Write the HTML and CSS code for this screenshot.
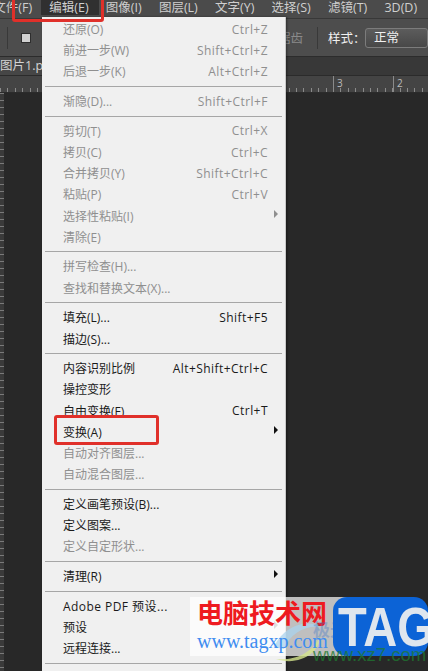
FILE: index.html
```html
<!DOCTYPE html>
<html lang="zh">
<head>
<meta charset="utf-8">
<title>编辑菜单</title>
<link rel="stylesheet" href="styles.css">
</head>
<body>
<div class="app">
  <nav class="menubar">
    <span class="mi first">文件(F)</span>
    <span class="mi active">编辑(E)</span>
    <span class="mi">图像(I)</span>
    <span class="mi">图层(L)</span>
    <span class="mi">文字(Y)</span>
    <span class="mi">选择(S)</span>
    <span class="mi">滤镜(T)</span>
    <span class="mi">3D(D)</span>
  </nav>
  <div class="options">
    <span class="vsep first-sep"></span>
    <span class="swatch"></span>
    <span class="aa">消除锯齿</span>
    <span class="vsep"></span>
    <span class="style-label">样式：</span>
    <span class="style-select">正常</span>
  </div>
  <div class="tabbar"><span class="tab">图片1.png</span></div>
  <div class="ruler">
    <span class="mark m3">3</span>
    <span class="mark m2">2</span>
  </div>
  <div class="workspace"><div class="vruler"></div></div>
</div>

<div class="menu">
  <div class="row off"><span>还原(O)</span><span class="key">Ctrl+Z</span></div>
  <div class="row off"><span>前进一步(W)</span><span class="key">Shift+Ctrl+Z</span></div>
  <div class="row off"><span>后退一步(K)</span><span class="key">Alt+Ctrl+Z</span></div>
  <hr class="sep">
  <div class="row off"><span>渐隐(D)...</span><span class="key">Shift+Ctrl+F</span></div>
  <hr class="sep">
  <div class="row off"><span>剪切(T)</span><span class="key">Ctrl+X</span></div>
  <div class="row off"><span>拷贝(C)</span><span class="key">Ctrl+C</span></div>
  <div class="row off"><span>合并拷贝(Y)</span><span class="key">Shift+Ctrl+C</span></div>
  <div class="row off"><span>粘贴(P)</span><span class="key">Ctrl+V</span></div>
  <div class="row off"><span>选择性粘贴(I)</span><i class="arrow dim"></i></div>
  <div class="row off"><span>清除(E)</span></div>
  <hr class="sep">
  <div class="row off"><span>拼写检查(H)...</span></div>
  <div class="row off"><span>查找和替换文本(X)...</span></div>
  <hr class="sep">
  <div class="row"><span>填充(L)...</span><span class="key">Shift+F5</span></div>
  <div class="row"><span>描边(S)...</span></div>
  <hr class="sep">
  <div class="row"><span>内容识别比例</span><span class="key">Alt+Shift+Ctrl+C</span></div>
  <div class="row"><span>操控变形</span></div>
  <div class="row"><span>自由变换(F)</span><span class="key">Ctrl+T</span></div>
  <div class="row"><span>变换(A)</span><i class="arrow"></i></div>
  <div class="row off"><span>自动对齐图层...</span></div>
  <div class="row off"><span>自动混合图层...</span></div>
  <hr class="sep">
  <div class="row"><span>定义画笔预设(B)...</span></div>
  <div class="row"><span>定义图案...</span></div>
  <div class="row off"><span>定义自定形状...</span></div>
  <hr class="sep">
  <div class="row"><span>清理(R)</span><i class="arrow"></i></div>
  <hr class="sep">
  <div class="row"><span class="key">Adobe PDF 预设...</span></div>
  <div class="row"><span>预设</span><i class="arrow dim"></i></div>
  <div class="row"><span>远程连接...</span></div>
  <hr class="sep">
</div>

<div class="callout c-top"></div>
<div class="callout c-mid"></div>

<div class="watermark">
  <div class="wm-text">
    <svg class="wm-swirl" viewBox="0 0 60 50" width="60" height="50" aria-hidden="true">
      <path d="M4 34 C14 12 38 6 50 14 C36 12 20 20 14 36 Z" fill="#a9d3ee" opacity=".75"/>
      <path d="M6 46 C24 48 44 40 50 22 C52 38 30 54 6 46 Z" fill="#d5e58c" opacity=".8"/>
    </svg>
    <div class="wm-cn">电脑技术网</div>
    <div class="wm-url">www.tagxp.com</div>
  </div>
  <div class="wm-ghost">极光</div>
  <div class="wm-logo"><span class="wm-tag">TAG</span></div>
  <div class="wm-faint">www.xz7.com</div>
</div>
</body>
</html>
```
FILE: styles.css
```css
* { box-sizing: border-box; }
html, body { margin: 0; height: 100%; }
body {
  position: relative;
  width: 428px;
  height: 671px;
  overflow: hidden;
  background: #282828;
  font-family: "Open Sans", "Noto Sans CJK SC", sans-serif;
}
.app { display: flex; flex-direction: column; height: 671px; }
.menubar {
  height: 18px;
  flex: none;
  background: #4b4b4b;
  display: flex;
  gap: 17.2px;
  align-items: flex-start;
  color: #cfcfcf;
  font-size: 12.5px;
  line-height: 15px;
  white-space: nowrap;
}
.mi { flex: none; }
.mi.first { margin-left: -6.7px; }
.mi.active {
  height: 15px;
  margin: 0 -10px 0 -8px;
  padding: 0 10px 0 8px;
  background: #303030;
}
.options {
  height: 39px;
  flex: none;
  background: #4d4d4d;
  border-top: 1px solid #383838;
  border-bottom: 1px solid #2c2c2c;
  display: flex;
  align-items: center;
  color: #f0f0f0;
  font-size: 12.5px;
}
.vsep { width: 1px; height: 22px; flex: none; background: #393939; margin-right: 10px; }
.first-sep { margin-left: 7px; margin-right: 13px; }
.swatch { width: 10px; height: 10px; flex: none; background: #d2d2d2; border: 1px solid #2e2e2e; margin-right: 222px; }
.aa { color: #8a8a8a; white-space: nowrap; flex: none; margin-right: 14px; }
.style-label { white-space: nowrap; flex: none; width: 37px; }
.style-select {
  flex: 1;
  height: 20px;
  background: linear-gradient(#5c5c5c, #484848);
  border: 1px solid #7c7c7c;
  border-radius: 3px;
  padding-left: 8px;
  line-height: 18px;
  white-space: nowrap;
}
.tabbar { height: 18px; flex: none; background: #383838; display: flex; }
.tab { background: #464646; color: #d4d4d4; font-size: 12.5px; line-height: 17px; width: 42px; overflow: hidden; white-space: nowrap; }
.ruler {
  height: 18px;
  flex: none;
  background:
    repeating-linear-gradient(90deg, #8a8a8a 0 1px, transparent 1px 7.4px) 0 100% / 100% 4px no-repeat,
    #444;
  border-top: 1px solid #2b2b2b;
  border-bottom: 1px solid #2b2b2b;
  display: flex;
  color: #bbb;
  font-size: 10px;
  line-height: 14px;
}
.mark { border-left: 1px solid #8a8a8a; padding-left: 3px; flex: none; }
.m3 { margin-left: 333px; width: 60px; }
.m2 { width: 30px; }
.workspace { flex: 1; background: #282828; }
.vruler {
  width: 4px;
  height: 100%;
  background: repeating-linear-gradient(#7a7a7a 0 1px, #3a3a3a 1px 7px);
}
.menu {
  position: absolute;
  left: 42px;
  top: 17px;
  width: 244px;
  height: 654px;
  padding: 1.5px 3px 0;
  background: #f0f0f0;
  border-right: 1px solid #c8c8c8;
  box-shadow: 1px 0 2px rgba(0,0,0,.4);
  color: #1a1a1a;
  font-size: 12px;
  overflow: hidden;
}
.row {
  position: relative;
  height: 21.2px;
  padding: 0 14px 0 18px;
  display: flex;
  justify-content: space-between;
  align-items: center;
  white-space: nowrap;
}
.key { letter-spacing: .45px; }
.off { color: #8f8f8f; }
.arrow {
  position: absolute;
  right: 4px;
  top: 5px;
  width: 0;
  height: 0;
  border-left: 4px solid #111;
  border-top: 4px solid transparent;
  border-bottom: 4px solid transparent;
}
.arrow.dim { border-left-color: #8f8f8f; }
.sep { margin: 4px 0 3.5px; height: 1px; border: 0; background: #a6a6a6; }
.callout {
  position: absolute;
  border: 3px solid #e0302a;
  border-radius: 3px;
}
.c-top { left: 12px; top: -4px; width: 92px; height: 26px; }
.c-mid { left: 54px; top: 415px; width: 105px; height: 30px; }
.watermark { position: absolute; left: 190px; top: 597px; width: 238px; height: 68px; }
.wm-text {
  position: absolute;
  left: 0;
  top: 0;
  width: 180px;
  height: 59px;
  background: rgba(255,255,255,.7);
  padding-left: 7px;
}
.wm-swirl { position: absolute; left: 80px; top: 16px; }
.wm-cn { position: relative; color: #ee1a20; font-size: 26px; line-height: 30px; font-weight: 700; font-family: "Noto Sans CJK SC", sans-serif; white-space: nowrap; }
.wm-url { position: relative; color: #3f8df0; font-family: "Liberation Serif", serif; font-size: 20px; line-height: 22px; margin-top: 3px; white-space: nowrap; }
.wm-logo {
  position: absolute;
  left: 143px;
  top: 0;
  width: 95px;
  height: 59px;
  background: #0c63d6;
  border-radius: 14px;
  color: #dfe6ee;
  font-family: "Liberation Sans", sans-serif;
  font-weight: 700;
  font-size: 56px;
  line-height: 59px;
  overflow: hidden;
  white-space: nowrap;
}
.wm-tag { display: block; margin-left: 5px; transform: scaleX(.84); transform-origin: left center; }
.wm-ghost { position: absolute; left: 123px; top: 19px; color: #3c74c8; opacity: .35; font-size: 17px; font-weight: 700; white-space: nowrap; }
.wm-faint { position: absolute; left: 123px; top: 47px; color: #1f7a30; opacity: .75; font-family: "Liberation Sans", sans-serif; font-size: 18.5px; line-height: 22px; white-space: nowrap; }
```
